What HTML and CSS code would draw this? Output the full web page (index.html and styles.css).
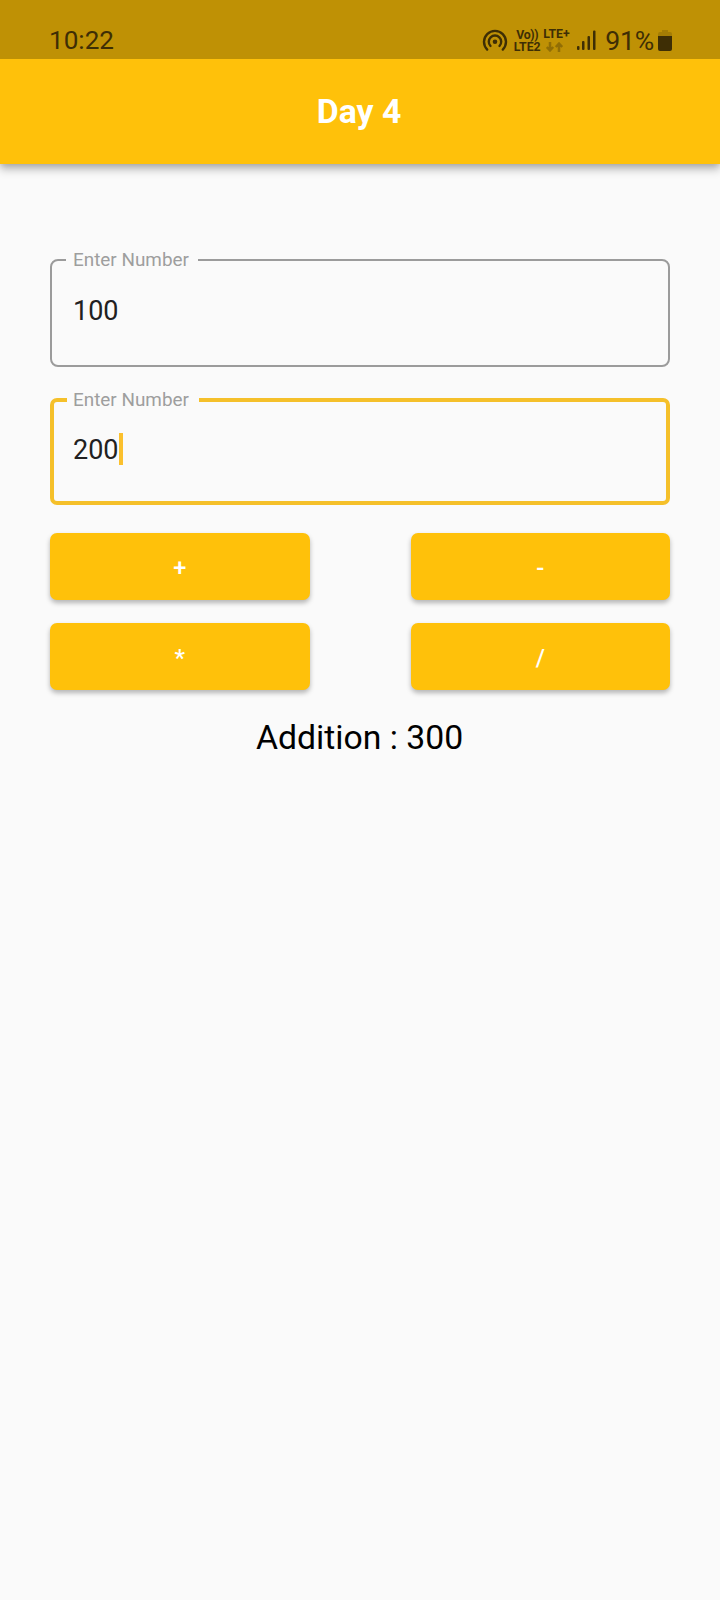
FILE: index.html
```html
<!DOCTYPE html>
<html lang="en">
<head>
<meta charset="utf-8">
<title>Day 4</title>
<link rel="stylesheet" href="styles.css">
</head>
<body>
<div class="status">
  <span class="clock">10:22</span>
  <div class="indicators">
    <svg class="hotspot" width="26" height="24" viewBox="0 0 26 24" fill="none" stroke="currentColor" stroke-width="2.4" stroke-linecap="round">
      <path d="M5.200 20.600A11 11 0 1 1 20.800 20.600"/>
      <path d="M8.500 17A6.200 6.200 0 1 1 17.500 17"/>
      <circle cx="13" cy="12.8" r="2.3" fill="currentColor" stroke="none"/>
    </svg>
    <div class="net volte"><span class="vo">Vo))</span><span>LTE2</span></div>
    <div class="net lte"><span>LTE+</span>
      <svg class="arrows" width="17" height="10" viewBox="0 0 17 10" fill="none" stroke="currentColor" stroke-width="2.5">
        <path d="M4 0v8M.8 5L4 8.4 7.2 5M13 10V2M9.800 5L13 1.600 16.200 5"/>
      </svg>
    </div>
    <svg class="signal" width="19" height="20" viewBox="0 0 19 20" fill="currentColor">
      <rect x="0" y="16" width="2.500" height="4" rx="1"/><rect x="5" y="11" width="2.500" height="9" rx="1"/><rect x="10.500" y="6" width="2.500" height="14" rx="1"/><rect x="16" y="0.500" width="2.500" height="19.500" rx="1"/>
    </svg>
    <span class="percent">91%</span>
    <svg class="battery" width="14" height="21" viewBox="0 0 14 21" fill="currentColor">
      <path opacity=".2" d="M4 0h6v2h2q2 0 2 2v2H0V4q0-2 2-2h2z"/>
      <path d="M0 6h14V19q0 2-2 2H2q-2 0-2-2z"/>
    </svg>
  </div>
</div>
<header class="appbar"><h1>Day 4</h1></header>
<main>
  <fieldset class="field"><legend>Enter Number</legend><span class="value">100</span></fieldset>
  <fieldset class="field focused"><legend>Enter Number</legend><span class="value">200</span><i class="caret"></i></fieldset>
  <div class="keys">
    <button>+</button><button>-</button><button>*</button><button>/</button>
  </div>
  <p class="result">Addition : 300</p>
</main>
</body>
</html>
```
FILE: styles.css
```css
* { box-sizing: border-box; }
body {
  margin: 0;
  min-height: 1600px;
  background: #fafafa;
  font-family: Roboto, sans-serif;
}
.status {
  position: relative;
  z-index: 1;
  height: 58.5px;
  padding: 23px 48px 0 49px;
  display: flex;
  justify-content: space-between;
  background: #bf9105;
  color: #3e2e05;
}
.clock { font-size: 26.1px; line-height: 35px; }
.percent { font-size: 26.6px; line-height: 35px; letter-spacing: -.2px; }
.indicators { display: flex; align-items: flex-start; }
.hotspot { margin-top: 6px; }
.net {
  display: flex;
  flex-direction: column;
  font-size: 12.3px;
  line-height: 12px;
  font-weight: 700;
}
.volte { width: 28px; margin: 6px 0 0 5px; align-items: center; }
.vo { letter-spacing: -.4px; }
.lte { width: 28px; margin: 5px 0 0 2px; }
.arrows { margin: 2px 0 0 3px; opacity: .35; }
.signal { margin: 7px 9px 0 6px; }
.battery { margin: 7px 0 0 4px; }
.appbar {
  height: 105px;
  padding: 2px 2px 0 0;
  display: flex;
  align-items: center;
  justify-content: center;
  background: #ffc10a;
  box-shadow: 0 5px 9px rgba(0, 0, 0, .28), 0 1px 6px rgba(0, 0, 0, .12);
}
h1 { margin: 0; font-size: 33.75px; font-weight: 700; line-height: 40px; color: #fff; }
main { padding: 84.5px 50px 0; }
.field {
  height: 118.5px;
  margin: 0 0 21.5px;
  padding: 0 15px 0 14px;
  display: flex;
  min-width: 0;
  border: 2px solid #9b9b9b;
  border-radius: 8px;
  align-items: flex-start;
}
.field legend {
  padding: 0 9px 0 7px;
  font-size: 18.9px;
  line-height: 24px;
  color: #9e9e9e;
}
.value { margin: 22px 0 0 7px; font-size: 27px; line-height: 34px; color: #212121; }
.focused { height: 117px; border: 4px solid #f5c02a; margin-bottom: 28px; padding-left: 13px; border-radius: 7px; }
.focused legend { padding: 0 10px 0 6px; }
.focused .value { margin: 21px 0 0 6px; }
.caret { width: 4px; height: 32px; margin-top: 21px; background: #fbc02d; }
.keys { display: grid; grid-template-columns: 259.5px 259.5px; justify-content: space-between; row-gap: 23px; }
.keys button {
  height: 67px;
  border: 0;
  border-radius: 7px;
  padding: 2px 0 0;
  background: #ffc10a;
  box-shadow: 0 3px 5px rgba(0, 0, 0, .28);
  color: #fff;
  font: 500 23.6px/28px Roboto, sans-serif;
}
.result { margin: 28px 1px 0 0; font-size: 33.75px; line-height: 40px; text-align: center; color: #000; }
```
